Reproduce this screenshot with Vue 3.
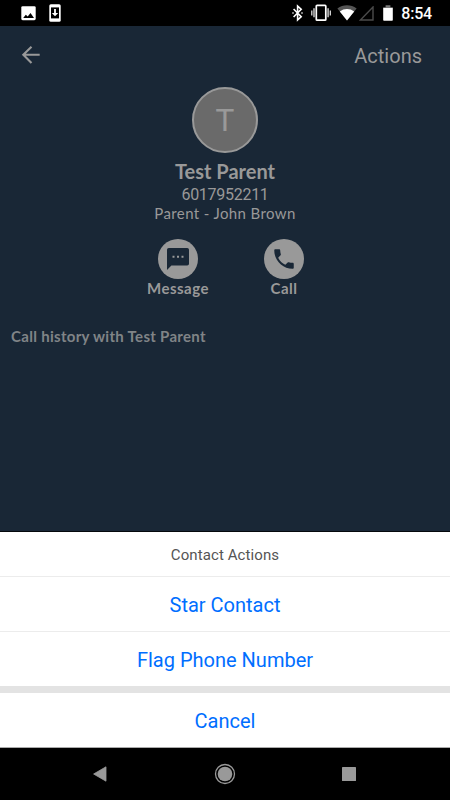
<template>
  <div class="screen">
    <div class="status-bar">
      <div class="status-left">
        <svg class="photo-icon" width="15" height="15" viewBox="0 0 15 15">
          <rect x="0.3" y="0.2" width="14.4" height="14" rx="1.4" fill="#fff" />
          <path d="M2.2 12l2.6-3.2 1.9 1.7 2.8-3.4L13 12z" fill="#000" />
        </svg>
        <svg width="12" height="18" viewBox="0 0 12 18">
          <rect x="0.3" y="0.2" width="11.4" height="17.6" rx="1.6" fill="#fff" />
          <path d="M2 3.4h8v11H2z" fill="#000" />
          <path d="M5.1 5h1.8v4h2.3L6 12.3 2.8 9h2.3z" fill="#fff" />
        </svg>
      </div>
      <div class="status-right">
        <svg class="bluetooth" width="12" height="18" viewBox="0 0 12 18">
          <path d="M1.6 5l7.6 7.7-3.6 3.3V2l3.6 3.3L1.6 13" fill="none" stroke="#fff" stroke-width="1.6" />
          <path d="M0.2 9h1.6M9.2 9h1.6" stroke="#ccc" stroke-width="1.7" />
        </svg>
        <svg class="vibrate" width="20" height="18" viewBox="0 0 20 18">
          <rect x="5.3" y="1.4" width="9.5" height="14.8" rx="0.8" fill="none" stroke="#fff" stroke-width="1.7" />
          <path d="M3 4.3v9M17.1 4.3v9" stroke="#bbb" stroke-width="1.6" />
          <path d="M0.8 6.4v5M19.3 6.4v5" stroke="#ddd" stroke-width="1.3" />
        </svg>
        <svg class="wifi" width="20" height="16" viewBox="0 0 20 16">
          <path d="M0.4 3.5C6-0.9 14-0.9 19.6 3.5L10 15.6z" fill="#555" />
          <path d="M2.8 6.5C7.2 3.2 12.8 3.2 17.2 6.5L10 15.6z" fill="#fff" />
        </svg>
        <svg class="signal" width="15" height="15" viewBox="0 0 15 15">
          <path d="M14 1v13H1.4z" fill="none" stroke="#4b4b4b" stroke-width="1.4" />
        </svg>
        <svg class="battery" width="10" height="16" viewBox="0 0 10 16">
          <path d="M0.2 3V2.2h2.4V0.2h4.8v2h2.4V3z" fill="#777" />
          <path d="M0.2 3h9.6v11.9q0 .8-.8.8H1q-.8 0-.8-.8z" fill="#fff" />
        </svg>
        <span class="clock">8:54</span>
      </div>
    </div>

    <div class="contact">
      <div class="header">
        <svg width="20" height="20" viewBox="0 0 20 20">
          <path d="M18.7 9.8H2.5M10.5 1.7L2.3 9.8l8.2 8.1" fill="none" stroke="#999" stroke-width="2.1" />
        </svg>
        <span class="header-actions">Actions</span>
      </div>

      <div class="profile">
        <div class="avatar">
          <span>T</span>
        </div>
        <div class="name">{{ contact.name }}</div>
        <div class="phone">{{ contact.phone }}</div>
        <div class="relation">{{ contact.relation }}</div>
      </div>

      <div class="buttons">
        <div class="action">
          <div class="circle">
            <svg width="22" height="22" viewBox="0 0 22 22">
              <path d="M1.8 0h18.4Q22 0 22 1.8v14q0 1.8-1.8 1.8H4.4L0 22V1.8Q0 0 1.8 0z" fill="#192736" />
              <path d="M5.5 7.7h2v2h-2zM10 7.7h2v2h-2zM14.5 7.7h2v2h-2z" fill="#999" />
            </svg>
          </div>
          <span>Message</span>
        </div>
        <div class="action">
          <div class="circle">
            <svg width="26" height="26" viewBox="0 0 24 24">
              <path d="M6.62 10.79c1.44 2.83 3.76 5.14 6.59 6.59l2.2-2.2c.27-.27.67-.36 1.02-.24 1.12.37 2.33.57 3.57.57.55 0 1 .45 1 1V20c0 .55-.45 1-1 1-9.39 0-17-7.61-17-17 0-.55.45-1 1-1h3.5c.55 0 1 .45 1 1 0 1.25.2 2.45.57 3.57.11.35.03.74-.25 1.02l-2.2 2.2z" fill="#192736" />
            </svg>
          </div>
          <span>Call</span>
        </div>
      </div>

      <div class="history">Call history with {{ contact.name }}</div>
    </div>

    <div class="sheet">
      <div class="sheet-title">Contact Actions</div>
      <div v-for="option in options" :key="option" class="sheet-option">{{ option }}</div>
      <div class="sheet-gap"></div>
      <div class="sheet-cancel">Cancel</div>
    </div>

    <div class="nav-bar">
      <svg width="14" height="16" viewBox="0 0 14 16">
        <path d="M13 0.8v14.4L0.6 8z" fill="#999" stroke="#999" stroke-width="0.8" stroke-linejoin="round" />
      </svg>
      <svg width="22" height="22" viewBox="0 0 22 22">
        <circle cx="11" cy="11" r="9.5" fill="none" stroke="#999" stroke-width="1.3" />
        <circle cx="11" cy="11" r="7.3" fill="#999" />
      </svg>
      <svg width="14" height="14" viewBox="0 0 14 14">
        <rect width="14" height="14" rx="0.6" fill="#999" />
      </svg>
    </div>
  </div>
</template>

<script setup>
import { ref } from 'vue';

const contact = ref({
  name: 'Test Parent',
  phone: '6017952211',
  relation: 'Parent - John Brown'
});

const options = ['Star Contact', 'Flag Phone Number'];
</script>

<style>
body {
  margin: 0;
  background: #000;
}
</style>

<style scoped>
.screen {
  width: 450px;
  height: 800px;
  display: flex;
  flex-direction: column;
  overflow: hidden;
  background: #000;
  font-family: Roboto, sans-serif;
}
svg {
  display: block;
  flex-shrink: 0;
}
.status-bar {
  height: 26px;
  display: flex;
  justify-content: space-between;
  padding: 0 18px 0 21px;
  box-sizing: border-box;
}
.status-left,
.status-right {
  display: flex;
  align-items: center;
}
.status-left {
  gap: 13px;
}
.bluetooth {
  margin-right: 7px;
}
.vibrate {
  margin-right: 6px;
}
.wifi {
  margin-right: 2px;
}
.signal {
  margin-right: 9px;
}
.battery {
  margin-right: 8px;
}
.clock {
  color: #fff;
  font-size: 16px;
  font-weight: 500;
  line-height: 24px;
  letter-spacing: -0.2px;
  padding-top: 2px;
}
.contact {
  height: 506px;
  background: #192736;
  color: #999;
  border-bottom: 1px solid #05090d;
  box-sizing: border-box;
}
.header {
  height: 61px;
  display: flex;
  justify-content: space-between;
  align-items: center;
  padding: 0 28px 3px 21px;
  box-sizing: border-box;
}
.header-actions {
  font-size: 20px;
  line-height: 26px;
  padding-top: 2px;
}
.profile {
  display: flex;
  flex-direction: column;
  align-items: center;
  font-family: Lato, sans-serif;
}
.avatar {
  width: 66px;
  height: 66px;
  border: 2px solid #999;
  border-radius: 50%;
  background: #6a6a6a;
  box-sizing: border-box;
  display: flex;
  align-items: center;
  justify-content: center;
  font-size: 31px;
  line-height: 36px;
}
.avatar span {
  padding-bottom: 3px;
}
.name {
  font-size: 20px;
  font-weight: bold;
  line-height: 24px;
  margin-top: 6px;
}
.phone {
  font-family: Roboto, sans-serif;
  font-size: 16px;
  line-height: 20px;
  letter-spacing: -0.28px;
  margin-top: 2px;
}
.relation {
  font-size: 15px;
  line-height: 20px;
  letter-spacing: 0.38px;
  margin-top: -2px;
}
.buttons {
  display: flex;
  justify-content: center;
  padding: 16px 0 0 12px;
  gap: 26px;
}
.action {
  width: 80px;
  display: flex;
  flex-direction: column;
  align-items: center;
  font-family: Lato, sans-serif;
  font-size: 15px;
  font-weight: bold;
  line-height: 18px;
  letter-spacing: 0.5px;
}
.circle {
  width: 40px;
  height: 40px;
  border-radius: 50%;
  background: #999;
  display: flex;
  align-items: center;
  justify-content: center;
}
.history {
  font-family: Lato, sans-serif;
  font-size: 15px;
  font-weight: bold;
  line-height: 20px;
  letter-spacing: 0.3px;
  color: #808487;
  padding: 29px 0 0 11px;
}
.sheet {
  height: 216px;
  background: #fff;
  text-align: center;
  border-bottom: 1px solid #aaa;
  box-sizing: border-box;
}
.sheet-title {
  height: 44px;
  line-height: 46px;
  font-size: 15px;
  letter-spacing: 0.1px;
  color: #555;
}
.sheet-option {
  height: 55px;
  line-height: 56px;
  font-size: 20px;
  color: #006eff;
  border-top: 1px solid #ececec;
  box-sizing: border-box;
}
.sheet-gap {
  height: 7px;
  background: #e3e3e3;
}
.sheet-cancel {
  height: 54px;
  line-height: 56px;
  font-size: 20px;
  color: #006eff;
}
.nav-bar {
  height: 52px;
  display: flex;
  justify-content: space-between;
  align-items: center;
  padding: 0 94px 0 93px;
  box-sizing: border-box;
}
</style>
